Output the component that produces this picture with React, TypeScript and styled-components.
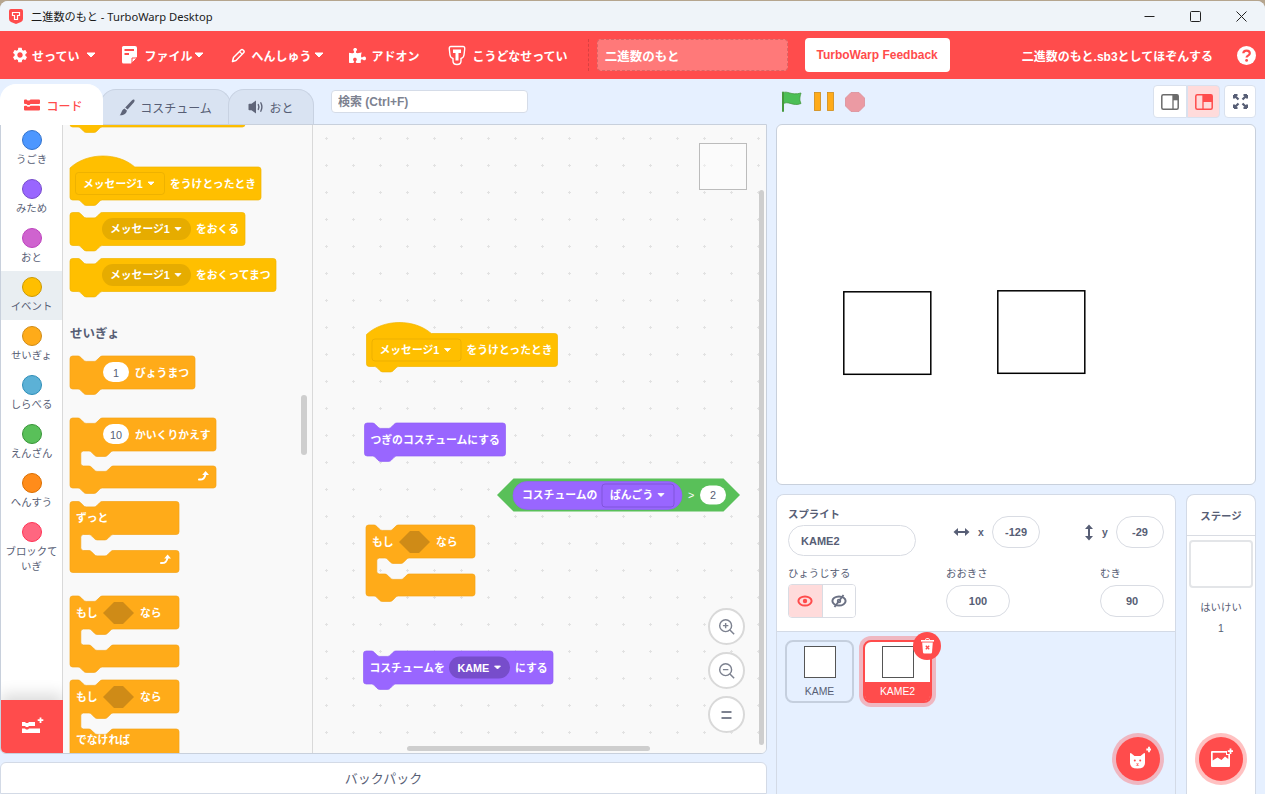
import React from "react";
import styled, { createGlobalStyle } from "styled-components";
import { MdSettings } from "react-icons/md";
import { FaPuzzlePiece } from "react-icons/fa";

const SANS = `"Liberation Sans", "Noto Sans CJK JP", sans-serif`;
const TEXT = "#575e75";
const RED = "#ff4c4c";

const GlobalStyle = createGlobalStyle`
  html, body { margin: 0; padding: 0; height: 100%; overflow: hidden; background: #b5a58e; }
  * { box-sizing: border-box; }
`;

const Win = styled.div`
  margin-top: 1px;
  height: 793px;
  display: flex;
  flex-direction: column;
  font-family: ${SANS};
  border-radius: 8px 8px 0 0;
  overflow: hidden;
  background: #e6f0ff;
`;

const TitleBar = styled.div`
  height: 30px;
  flex: none;
  display: flex;
  align-items: center;
  padding: 0 1px 0 8px;
  background: #eff4f9;
  font-family: "Noto Sans", "Noto Sans CJK JP", sans-serif;
  font-size: 11.2px;
  color: #1b1b1b;
`;

const TitleText = styled.span`
  margin-left: 7px;
  flex: 1;
`;

const WinButton = styled.div`
  width: 46px;
  height: 30px;
  display: flex;
  align-items: center;
  justify-content: center;
`;

const MenuBar = styled.div`
  height: 48px;
  flex: none;
  display: flex;
  align-items: center;
  background: ${RED};
  padding: 0 9px 0 11px;
  color: #fff;
  font-size: 12px;
  font-weight: bold;
`;

const MenuItem = styled.div<{ $gap: number }>`
  display: flex;
  align-items: center;
  margin-right: ${(p) => p.$gap}px;
  white-space: nowrap;
`;

const MenuLabel = styled.span<{ $left: number; $right?: number }>`
  margin-left: ${(p) => p.$left}px;
  margin-right: ${(p) => p.$right ?? 0}px;
`;

const MenuDivider = styled.div`
  width: 1px;
  height: 32px;
  border-left: 1px dashed rgba(0, 0, 0, 0.15);
  margin-right: 8px;
`;

const TitleInput = styled.div`
  width: 191px;
  height: 32px;
  margin-right: 17px;
  padding-left: 7px;
  display: flex;
  align-items: center;
  background: rgba(255, 255, 255, 0.25);
  border: 1px dashed rgba(0, 0, 0, 0.15);
  border-radius: 4px;
  font-size: 12.5px;
`;

const FeedbackButton = styled.div`
  width: 145px;
  height: 34px;
  display: flex;
  align-items: center;
  justify-content: center;
  background: #fff;
  border-radius: 4px;
  color: ${RED};
`;

const SaveLabel = styled.div`
  margin-left: auto;
  margin-right: 24px;
  white-space: nowrap;
`;

const Main = styled.div`
  flex: 1;
  min-height: 0;
  display: flex;
  gap: 9px;
`;

const LeftColumn = styled.div`
  width: 767px;
  flex: none;
  padding-top: 5px;
  display: flex;
  flex-direction: column;
`;

const TabRow = styled.div`
  height: 40px;
  flex: none;
  display: flex;
  align-items: flex-end;
`;

const Tab = styled.div<{ $active?: boolean; $width: number }>`
  width: ${(p) => p.$width}px;
  height: ${(p) => (p.$active ? 41 : 35)}px;
  margin-left: ${(p) => (p.$active ? 0 : -3)}px;
  margin-bottom: ${(p) => (p.$active ? -1 : 0)}px;
  padding-left: ${(p) => (p.$active ? 4 : 0)}px;
  z-index: ${(p) => (p.$active ? 2 : 1)};
  display: flex;
  align-items: center;
  justify-content: center;
  gap: ${(p) => (p.$active ? 6 : 5)}px;
  font-size: 12px;
  font-weight: ${(p) => (p.$active ? 500 : "normal")};
  color: ${(p) => (p.$active ? RED : TEXT)};
  background: ${(p) => (p.$active ? "#fff" : "#d9e3f2")};
  border: 1px solid ${(p) => (p.$active ? "#fff" : "#c8d2e2")};
  border-bottom: none;
  border-radius: 16px 16px 0 0;
`;

const SearchInput = styled.input`
  width: 197px;
  height: 23px;
  margin: 0 0 11px 17px;
  padding: 0 6px;
  border: 1px solid #d5dce8;
  border-radius: 4px;
  background: #fff;
  font-family: ${SANS};
  font-size: 12px;
  font-weight: bold;
  &::placeholder { color: #7d8290; opacity: 1; }
`;

const Editor = styled.div`
  height: 630px;
  flex: none;
  position: relative;
  display: flex;
  background: #fff;
  border: 1px solid #c8d0dc;
  border-radius: 0 0 6px 6px;
  overflow: hidden;
`;

const Categories = styled.div`
  width: 62px;
  flex: none;
  display: flex;
  flex-direction: column;
  position: relative;
  margin-top: -1px;
  border-right: 1px solid #d9d9d9;
`;

const Category = styled.div<{ $active?: boolean }>`
  min-height: 49px;
  padding: 6px 2px 0;
  display: flex;
  flex-direction: column;
  align-items: center;
  gap: 2px;
  font-size: 10.4px;
  line-height: 15px;
  text-align: center;
  color: ${TEXT};
  background: ${(p) => (p.$active ? "#e9eef2" : "transparent")};
`;

const CategoryDot = styled.div<{ $color: string; $edge: string }>`
  width: 20px;
  height: 20px;
  flex: none;
  border-radius: 50%;
  background: ${(p) => p.$color};
  border: 1px solid ${(p) => p.$edge};
`;

const ExtensionButton = styled.div`
  position: absolute;
  left: 0;
  bottom: 0;
  width: 62px;
  height: 53px;
  display: flex;
  align-items: center;
  justify-content: center;
  background: ${RED};
  box-shadow: 0 -6px 14px rgba(0, 0, 0, 0.14);
`;

const Flyout = styled.div`
  width: 250px;
  flex: none;
  position: relative;
  background: #f9f9f9;
  border-right: 1px solid #d9d9d9;
  overflow: hidden;
`;

const Workspace = styled.div`
  flex: 1;
  position: relative;
  background-color: #f9f9f9;
  background-image: radial-gradient(circle, #e2e2e2 1px, transparent 1.4px);
  background-size: 27px 27px;
  overflow: hidden;
`;

const BlockCanvas = styled.svg`
  display: block;
  width: 100%;
  height: 100%;
  font-family: ${SANS};
`;

const Label = styled.text<{ $plain?: boolean }>`
  fill: #fff;
  font-size: 10.8px;
  font-weight: ${(p) => (p.$plain ? "normal" : "bold")};
`;

const Heading = styled.text`
  fill: ${TEXT};
  font-size: 12.5px;
  font-weight: bold;
`;

const FieldText = styled.text`
  fill: ${TEXT};
  font-size: 10.8px;
  text-anchor: middle;
`;

const ScrollThumb = styled.div<{ $x: number; $y: number; $w: number; $h: number }>`
  position: absolute;
  left: ${(p) => p.$x}px;
  top: ${(p) => p.$y}px;
  width: ${(p) => p.$w}px;
  height: ${(p) => p.$h}px;
  border-radius: 4px;
  background: #cecece;
`;

const Minimap = styled.div`
  position: absolute;
  right: 19px;
  top: 18px;
  width: 48px;
  height: 47px;
  background: rgba(255, 255, 255, 0.35);
  border: 1px solid #bcbcbc;
`;

const ZoomStack = styled.div`
  position: absolute;
  right: 21px;
  bottom: 20px;
  display: flex;
  flex-direction: column;
  gap: 7px;
`;

const ZoomButton = styled.div`
  width: 37px;
  height: 37px;
  border-radius: 50%;
  display: flex;
  align-items: center;
  justify-content: center;
  background: #fff;
  border: 2px solid #d9d9d9;
`;

const Backpack = styled.div`
  margin-top: 8px;
  flex: 1;
  display: flex;
  justify-content: center;
  padding-top: 5px;
  background: #fff;
  border: 1px solid #d3dae6;
  border-radius: 6px 6px 0 0;
  font-size: 13px;
  color: ${TEXT};
`;

const RightColumn = styled.div`
  width: 480px;
  flex: none;
  padding-top: 5px;
  display: flex;
  flex-direction: column;
`;

const ControlRow = styled.div`
  height: 40px;
  flex: none;
  display: flex;
  padding: 1px 0 6px;
`;

const RunControls = styled.div`
  display: flex;
  align-items: center;
  gap: 11px;
  margin-left: 5px;
`;

const ViewButtons = styled.div`
  margin-left: auto;
  display: flex;
`;

const ViewButton = styled.div<{ $active?: boolean; $side: "left" | "right" | "both"; $width: number }>`
  width: ${(p) => p.$width}px;
  height: 33px;
  margin-left: ${(p) => (p.$side === "both" ? 4 : 0)}px;
  display: flex;
  align-items: center;
  justify-content: center;
  background: ${(p) => (p.$active ? "#ffdbdb" : "#fff")};
  border: 1px solid #d9e1ee;
  border-radius: ${(p) =>
    p.$side === "left" ? "4px 0 0 4px" : p.$side === "right" ? "0 4px 4px 0" : "4px"};
`;

const Stage = styled.div`
  height: 361px;
  flex: none;
  background: #fff;
  border: 1px solid #c8d0dc;
  border-radius: 6px;
  overflow: hidden;
`;

const LowerRow = styled.div`
  margin-top: 9px;
  flex: 1;
  display: flex;
  gap: 10px;
`;

const SpritePanel = styled.div`
  width: 400px;
  flex: none;
  position: relative;
  display: flex;
  flex-direction: column;
  border: 1px solid #d3dae6;
  border-bottom: none;
  border-radius: 8px 8px 0 0;
  overflow: hidden;
`;

const SpriteInfo = styled.div`
  height: 137px;
  flex: none;
  padding: 13px 11px 0;
  background: #fff;
  border-bottom: 1px solid #d3dae6;
`;

const InfoRow = styled.div`
  display: flex;
  align-items: flex-start;
`;

const FieldColumn = styled.div<{ $width?: number; $auto?: boolean }>`
  width: ${(p) => (p.$width ? `${p.$width}px` : "auto")};
  margin-left: ${(p) => (p.$auto ? "auto" : 0)};
  display: flex;
  flex-direction: column;
`;

const FieldLabel = styled.div<{ $strong?: boolean }>`
  height: 13px;
  line-height: 13px;
  margin-bottom: ${(p) => (p.$strong ? 4 : 5)}px;
  font-size: 10.4px;
  font-weight: ${(p) => (p.$strong ? "bold" : "normal")};
  color: ${TEXT};
`;

const PillInput = styled.div<{ $width: number; $height?: number; $left?: boolean }>`
  width: ${(p) => p.$width}px;
  height: ${(p) => p.$height ?? 32}px;
  display: flex;
  align-items: center;
  justify-content: ${(p) => (p.$left ? "flex-start" : "center")};
  padding-left: ${(p) => (p.$left ? 12 : 0)}px;
  border: 1px solid #d9dce3;
  border-radius: 16px;
  background: #fff;
  font-size: 11px;
  font-weight: bold;
  color: ${TEXT};
`;

const CoordGroup = styled.div<{ $left?: number; $auto?: boolean }>`
  display: flex;
  align-items: center;
  margin-top: 8px;
  margin-left: ${(p) => (p.$auto ? "auto" : `${p.$left ?? 0}px`)};
  font-size: 10.4px;
  font-weight: bold;
  color: ${TEXT};
`;

const CoordLetter = styled.span`
  width: 22px;
  padding-left: 8px;
`;

const LowerInfoRow = styled(InfoRow)`
  margin-top: 11px;
`;

const VisibilityToggle = styled.div`
  display: flex;
  width: 68px;
  height: 34px;
  margin-top: -1px;
  border: 1px solid #d9dce3;
  border-radius: 4px;
  overflow: hidden;
`;

const VisibilityOption = styled.div<{ $active?: boolean }>`
  flex: 1;
  display: flex;
  align-items: center;
  justify-content: center;
  background: ${(p) => (p.$active ? "#ffdbdb" : "#fff")};
  & + & { border-left: 1px solid #d9dce3; }
`;

const SpriteList = styled.div`
  flex: 1;
  display: flex;
  align-items: flex-start;
  gap: 9px;
  padding: 8px 8px;
`;

const SpriteTile = styled.div<{ $selected?: boolean }>`
  position: relative;
  width: 69px;
  height: 63px;
  display: flex;
  flex-direction: column;
  align-items: center;
  border: 2px solid ${(p) => (p.$selected ? RED : "#c5cfde")};
  border-radius: 8px;
  background: ${(p) => (p.$selected ? "#fff" : "transparent")};
  box-shadow: ${(p) => (p.$selected ? "0 0 0 4px rgba(255, 76, 76, 0.35)" : "none")};
`;

const SpriteThumb = styled.div`
  width: 32px;
  height: 32px;
  margin-top: 4px;
  flex: none;
  background: #fff;
  border: 1px solid #555;
`;

const SpriteName = styled.div<{ $selected?: boolean }>`
  align-self: stretch;
  flex: 1;
  margin-top: 4px;
  display: flex;
  align-items: center;
  justify-content: center;
  font-size: 10.4px;
  color: ${(p) => (p.$selected ? "#fff" : TEXT)};
  background: ${(p) => (p.$selected ? RED : "transparent")};
  border-radius: 0 0 5px 5px;
`;

const DeleteBadge = styled.div`
  position: absolute;
  right: -11px;
  top: -10px;
  width: 28px;
  height: 28px;
  display: flex;
  align-items: center;
  justify-content: center;
  border-radius: 50%;
  background: ${RED};
`;

const AddButton = styled.div<{ $right: number }>`
  position: absolute;
  right: ${(p) => p.$right}px;
  bottom: 13px;
  width: 44px;
  height: 44px;
  display: flex;
  align-items: center;
  justify-content: center;
  border-radius: 50%;
  background: ${RED};
  box-shadow: 0 0 0 4px rgba(255, 76, 76, 0.35);
`;

const StagePanel = styled.div`
  width: 70px;
  flex: none;
  position: relative;
  display: flex;
  flex-direction: column;
  align-items: center;
  background: #fff;
  border: 1px solid #d3dae6;
  border-bottom: none;
  border-radius: 8px 8px 0 0;
  color: ${TEXT};
  font-size: 10.4px;
`;

const StageHeading = styled.div`
  align-self: stretch;
  height: 41px;
  display: flex;
  align-items: center;
  justify-content: center;
  font-weight: bold;
  border-bottom: 1px solid #d9dce3;
`;

const StageThumb = styled.div`
  width: 64px;
  height: 48px;
  margin-top: 4px;
  background: #fff;
  border: 2px solid #e3e5e8;
  border-radius: 4px;
`;

const StageCaption = styled.div`
  margin-top: 14px;
  line-height: 12px;
`;

const BackdropCount = styled.div`
  margin-top: 9px;
  line-height: 12px;
`;

/* block outlines, scaled the way the editor draws them (0.675) */
const R = "a2.7,2.7 0 0 1";
const NOTCH_R =
  "c1.35,0 2,.68 2.7,1.35 l2.7,2.7 c.68,.68 1.35,1.35 2.7,1.35 h8.1 c1.35,0 2,-.68 2.7,-1.35 l2.7,-2.7 c.68,-.68 1.35,-1.35 2.7,-1.35";
const NOTCH_L =
  "c-1.35,0 -2,.68 -2.7,1.35 l-2.7,2.7 c-.68,.68 -1.35,1.35 -2.7,1.35 h-8.1 c-1.35,0 -2,-.68 -2.7,-1.35 l-2.7,-2.7 c-.68,-.68 -1.35,-1.35 -2.7,-1.35";

const stackTop = (w: number) => `M0,2.7 ${R} 2.7,-2.7 H8 ${NOTCH_R} H${w - 2.7} ${R} 2.7,2.7`;

const bottomEdge = (w: number, y: number, bump: boolean) =>
  `V${y - 2.7} ${R} -2.7,2.7 ${bump ? `H32.3 ${NOTCH_L}` : ""} H2.7 ${R} -2.7,-2.7 Z`;

const stackPath = (w: number, h = 33) => `${stackTop(w)} ${bottomEdge(w, h, true)}`;

const hatPath = (w: number, h = 33) =>
  `M0,1 c16.9,-15.85 47.9,-15.85 64.8,-1 H${w - 2.7} ${R} 2.7,2.7 ${bottomEdge(w, h, true)}`;

const cPath = (w: number, top: number, mouth: number, arm: number, bump: boolean) => {
  const inner = top + mouth;
  return `${stackTop(w)} V${top - 2.7} ${R} -2.7,2.7 H43.2 ${NOTCH_L} H13.5
    a2.7,2.7 0 0 0 -2.7,2.7 V${inner - 2.7} a2.7,2.7 0 0 0 2.7,2.7 H18.9 ${NOTCH_R}
    H${w - 2.7} ${R} 2.7,2.7 ${bottomEdge(w, inner + arm, bump)}`;
};

const hexPath = (w: number, h: number) =>
  `M${h / 2},0 H${w - h / 2} L${w},${h / 2} L${w - h / 2},${h} H${h / 2} L0,${h / 2} Z`;

const EVENT = { fill: "#ffbf00", edge: "#f0b400", dark: "#e6ac00" };
const CONTROL = { fill: "#ffab19", edge: "#f5a316", dark: "#cf8b17" };
const LOOKS = { fill: "#9966ff", edge: "#9160f5", dark: "#774dcb" };

type Tone = typeof EVENT;

function Shape({ x, y, d, tone, children }: { x: number; y: number; d: string; tone: Tone; children?: React.ReactNode }) {
  return (
    <g transform={`translate(${x} ${y})`}>
      <path d={d} fill={tone.fill} stroke={tone.edge} strokeWidth={0.7} />
      {children}
    </g>
  );
}

const Caret = ({ x, y }: { x: number; y: number }) => (
  <path d={`M${x},${y} h6 l-3,3 z`} fill="#fff" stroke="#fff" strokeWidth={0.8} strokeLinejoin="round" />
);

const Text = ({ x, y = 20.5, children }: { x: number; y?: number; children: React.ReactNode }) => (
  <Label x={x} y={y}>{children}</Label>
);

const MessagePill = () => (
  <>
    <rect x={32} y={5.5} width={89} height={22} rx={11} fill={EVENT.dark} />
    <Text x={40}>メッセージ1</Text>
    <Caret x={105} y={15} />
  </>
);

const NumberPill = ({ value }: { value: string }) => (
  <>
    <rect x={33} y={6} width={26} height={20} rx={10} fill="#fff" />
    <FieldText x={46} y={20.5}>{value}</FieldText>
  </>
);

const LoopArrow = ({ x, y }: { x: number; y: number }) => (
  <g transform={`translate(${x} ${y})`}>
    <path d="M0,8.5 C4,9 6,7 6.5,3" fill="none" stroke="#fff" strokeWidth={2} strokeLinecap="round" />
    <path d="M3.2,4 L6.6,0 L10,4 Z" fill="#fff" />
  </g>
);

const HexSlot = ({ x, y }: { x: number; y: number }) => (
  <path d={hexPath(31, 22)} transform={`translate(${x} ${y})`} fill={CONTROL.dark} />
);

function MessageHat({ x, y }: { x: number; y: number }) {
  return (
    <Shape x={x} y={y} d={hatPath(191)} tone={EVENT}>
      <rect x={5.5} y={5.5} width={89} height={22} rx={3} fill={EVENT.fill} stroke={EVENT.dark} strokeWidth={0.7} />
      <Text x={13}>メッセージ1</Text>
      <Caret x={78} y={15} />
      <Text x={100}>をうけとったとき</Text>
    </Shape>
  );
}

function IfBlock({ x, y }: { x: number; y: number }) {
  return (
    <Shape x={x} y={y} d={cPath(109, 33, 16, 22, true)} tone={CONTROL}>
      <Text x={6}>もし</Text>
      <HexSlot x={33} y={6} />
      <Text x={70}>なら</Text>
    </Shape>
  );
}

function Palette() {
  return (
    <BlockCanvas>
      <g transform="translate(-63 -125)">
        <Shape x={70} y={94} d={stackPath(175)} tone={EVENT} />
        <MessageHat x={70} y={167} />
        <Shape x={70} y={212.5} d={stackPath(175)} tone={EVENT}>
          <MessagePill />
          <Text x={126}>をおくる</Text>
        </Shape>
        <Shape x={70} y={258.5} d={stackPath(206)} tone={EVENT}>
          <MessagePill />
          <Text x={126}>をおくってまつ</Text>
        </Shape>
        <Heading x={70} y={338}>せいぎょ</Heading>
        <Shape x={70} y={356} d={stackPath(125)} tone={CONTROL}>
          <NumberPill value="1" />
          <Text x={65}>びょうまつ</Text>
        </Shape>
        <Shape x={70} y={418} d={cPath(146, 33, 15, 22, true)} tone={CONTROL}>
          <NumberPill value="10" />
          <Text x={65}>かいくりかえす</Text>
          <LoopArrow x={129} y={53} />
        </Shape>
        <Shape x={70} y={501.5} d={cPath(109, 33, 16, 22, false)} tone={CONTROL}>
          <Text x={6}>ずっと</Text>
          <LoopArrow x={91} y={53} />
        </Shape>
        <IfBlock x={70} y={596} />
        <Shape x={70} y={680} d={cPath(109, 33, 16, 40, true)} tone={CONTROL}>
          <Text x={6}>もし</Text>
          <HexSlot x={33} y={6} />
          <Text x={70}>なら</Text>
          <Text x={6} y={64}>でなければ</Text>
        </Shape>
      </g>
    </BlockCanvas>
  );
}

function Script() {
  return (
    <BlockCanvas>
      <g transform="translate(-313 -125)">
        <MessageHat x={366.5} y={333.5} />
        <Shape x={364.5} y={423} d={stackPath(141)} tone={LOOKS}>
          <Text x={6}>つぎのコスチュームにする</Text>
        </Shape>
        <g transform="translate(497 478.5)">
          <path d={hexPath(243, 33)} fill="#59c059" />
          <rect x={16} y={3} width={169} height={28} rx={14} fill={LOOKS.fill} stroke={LOOKS.edge} strokeWidth={0.7} />
          <Text x={25}>コスチュームの</Text>
          <rect x={105} y={5.5} width={72} height={23} rx={3} fill={LOOKS.fill} stroke={LOOKS.dark} strokeWidth={0.7} />
          <Text x={113}>ばんごう</Text>
          <Caret x={161} y={15} />
          <Label $plain x={191} y={20}>&gt;</Label>
          <rect x={203} y={7} width={26} height={19} rx={9.5} fill="#fff" />
          <FieldText x={216} y={20.5}>2</FieldText>
        </g>
        <IfBlock x={366} y={525} />
        <Shape x={363.5} y={651} d={stackPath(189.5)} tone={LOOKS}>
          <Text x={6}>コスチュームを</Text>
          <rect x={85.5} y={5.5} width={61} height={22} rx={11} fill={LOOKS.dark} />
          <Text x={94}>KAME</Text>
          <Caret x={131} y={15} />
          <Text x={151.5}>にする</Text>
        </Shape>
      </g>
    </BlockCanvas>
  );
}

const AppIcon = () => (
  <svg width="16" height="17" viewBox="0 0 16 17">
    <path d="M1,3 Q1,1 3,1 H13 Q15,1 15,3 V11 Q15,13 13,14 L8,16 L3,14 Q1,13 1,11 Z" fill="#ff4c4c" />
    <path d="M4.5,4.5 H11.5 V7.5 H9.5 V11.5 H6.5 V7.5 H4.5 Z" fill="none" stroke="#fff" strokeWidth={1.2} />
  </svg>
);

const MenuCaret = () => (
  <svg width="10" height="6" viewBox="0 0 10 6">
    <path d="M1,1 H9 L5,5 Z" fill="#fff" stroke="#fff" strokeWidth={1} strokeLinejoin="round" />
  </svg>
);

const FileIcon = () => (
  <svg width="17" height="20" viewBox="0 0 17 20">
    <path d="M2.5,1 H14 Q16,1 16,3 V12 L10,18.5 H2.5 Q1,18.5 1,17 V2.5 Q1,1 2.5,1 Z" fill="#fff" />
    <path d="M3.5,5 H13 M3.5,9 H8" stroke={RED} strokeWidth={1.8} />
    <path d="M11,18 L11,13 L16,13 Z" fill="#fff" stroke={RED} strokeWidth={1} />
  </svg>
);

const PencilIcon = () => (
  <svg width="14" height="15" viewBox="0 0 14 15">
    <path d="M1.5,13.5 L2.5,9.5 L10,2 Q11,1 12,2 L12.8,2.8 Q13.6,3.8 12.6,4.8 L5,12.5 Z" fill="none" stroke="#fff" strokeWidth={1.5} strokeLinejoin="round" />
    <path d="M8.5,3.5 L11.2,6.2" stroke="#fff" strokeWidth={1.2} />
  </svg>
);

const GuideIcon = () => (
  <svg width="18" height="21" viewBox="0 0 18 21">
    <path d="M3,1.5 H15 Q17,1.5 16.7,4 L16,10 Q15.5,13 13,13.5 V16 Q13,19.5 9,19.5 Q5,19.5 5,16 V13.5 Q2.5,13 2,10 L1.3,4 Q1,1.5 3,1.5 Z" fill="none" stroke="#fff" strokeWidth={1.4} />
    <path d="M5,4.5 H13 V8 H10.5 V15.5 H7.5 V8 H5 Z" fill="#fff" />
  </svg>
);

const HelpIcon = () => (
  <svg width="19" height="19" viewBox="0 0 19 19">
    <circle cx="9.5" cy="9.5" r="9.5" fill="#fff" />
    <path d="M6.3,7.3 C6.4,3.6 12.8,3.6 12.8,7.3 C12.8,9.6 9.6,9.5 9.6,11.4" fill="none" stroke={RED} strokeWidth={2.2} />
    <circle cx="9.6" cy="14.4" r="1.4" fill={RED} />
  </svg>
);

const CodeIcon = () => (
  <svg width="16" height="12" viewBox="0 0 16 12">
    <path d="M0,1.5 Q0,.5 1,.5 H2.5 L3.5,1.5 H5.5 L6.5,.5 H15 Q16,.5 16,1.5 V4 Q16,5 15,5 H6.5 L5.5,6 H3.5 L2.5,5 H1 Q0,5 0,4 Z" fill={RED} />
    <path d="M0,7.5 Q0,6.8 1,6.8 H2.5 L3.5,7.8 H5.5 L6.5,6.8 H15 Q16,6.8 16,7.5 V10.5 Q16,11.5 15,11.5 H1 Q0,11.5 0,10.5 Z" fill={RED} />
  </svg>
);

const BrushIcon = () => (
  <svg width="16" height="17" viewBox="0 0 16 17">
    <path d="M15,.6 C16,1.2 15.6,2.6 14.8,3.6 L8.6,10.6 L6.2,8.6 L12.8,1.6 C13.6,.8 14.4,.2 15,.6 Z" fill="#5f6579" />
    <path d="M5.4,9.4 L7.9,11.5 C7.6,14.6 4.4,16.6 .6,16.2 C2.6,14.8 2.2,10.8 5.4,9.4 Z" fill="#5f6579" />
  </svg>
);

const SpeakerIcon = () => (
  <svg width="16" height="14" viewBox="0 0 16 14">
    <path d="M.5,4.5 Q.5,3.8 1.3,3.8 H3.5 L8,.5 V13.5 L3.5,10.2 H1.3 Q.5,10.2 .5,9.5 Z" fill="#5f6579" />
    <path d="M10.3,4.6 Q11.6,7 10.3,9.4 M12.8,2.8 Q15,7 12.8,11.2" fill="none" stroke="#5f6579" strokeWidth={1.4} strokeLinecap="round" />
  </svg>
);

const AddBlocksIcon = () => (
  <svg width="24" height="20" viewBox="0 0 24 20">
    <path d="M2,5 H5 L6,6 H8 L9,5 H15 V9 H9 L8,10 H6 L5,9 H2 Z" fill="#fff" />
    <path d="M2,11.5 H5 L6,12.5 H8 L9,11.5 H20 V16 H2 Z" fill="#fff" />
    <path d="M20.5,.5 V6 M17.7,3.2 H23.3" stroke="#fff" strokeWidth={1.8} />
  </svg>
);

const ZoomGlass = ({ mark }: { mark: "in" | "out" }) => (
  <svg width="17" height="17" viewBox="0 0 20 20">
    <circle cx="9" cy="9" r="7" fill="none" stroke="#7d8290" strokeWidth={1.7} />
    <path d="M14,14 L19,19" stroke="#7d8290" strokeWidth={1.7} />
    <path d={mark === "in" ? "M5.8,9 H12.2 M9,5.8 V12.2" : "M5.8,9 H12.2"} stroke="#7d8290" strokeWidth={1.7} />
  </svg>
);

const ZoomReset = () => (
  <svg width="11" height="10" viewBox="0 0 11 10">
    <path d="M.5,2 H10.5 M.5,8 H10.5" stroke="#7d8290" strokeWidth={2} />
  </svg>
);

const FlagIcon = () => (
  <svg width="22" height="21" viewBox="0 0 22 21">
    <path d="M2,2 C6,-1 10,5 20,2 C19,6 18,8 20,12.5 C12,16 7,9 2,13 Z" fill="#4cbf56" stroke="#45993d" strokeWidth={0.8} />
    <path d="M2,1.5 V20" stroke="#45993d" strokeWidth={2} strokeLinecap="round" />
  </svg>
);

const PauseIcon = () => (
  <svg width="20" height="19" viewBox="0 0 20 19">
    <rect x="0.5" y="0.5" width="6" height="18" fill="#ffab19" stroke="#cf8b17" strokeWidth={0.8} />
    <rect x="13.5" y="0.5" width="6" height="18" fill="#ffab19" stroke="#cf8b17" strokeWidth={0.8} />
  </svg>
);

const StopIcon = () => (
  <svg width="20" height="20" viewBox="0 0 20 20">
    <path d="M6,.5 H14 L19.5,6 V14 L14,19.5 H6 L.5,14 V6 Z" fill="#eb9aa3" stroke="#dc8f98" strokeWidth={0.8} />
  </svg>
);

const LayoutSmallIcon = () => (
  <svg width="18" height="16" viewBox="0 0 18 16">
    <rect x=".8" y=".8" width="16.4" height="14.4" rx="1.5" fill="#fff" stroke="#6b6b6b" strokeWidth={1.5} />
    <path d="M12,1 V15" stroke="#6b6b6b" strokeWidth={1.3} />
    <rect x="12" y=".8" width="5.2" height="5.5" fill="#6b6b6b" />
  </svg>
);

const LayoutLargeIcon = () => (
  <svg width="18" height="16" viewBox="0 0 18 16">
    <rect x=".8" y=".8" width="16.4" height="14.4" rx="1.5" fill="#ffdbdb" stroke={RED} strokeWidth={1.5} />
    <path d="M8,1 V15" stroke={RED} strokeWidth={1.3} />
    <rect x="8" y=".8" width="9.2" height="7.2" fill={RED} />
  </svg>
);

const FullscreenIcon = () => (
  <svg width="15" height="15" viewBox="0 0 15 15">
    <path d="M1,1 L5.5,5.5 M1,1 H4.5 M1,1 V4.5 M14,1 L9.5,5.5 M14,1 H10.5 M14,1 V4.5 M1,14 L5.5,9.5 M1,14 H4.5 M1,14 V10.5 M14,14 L9.5,9.5 M14,14 H10.5 M14,14 V10.5" stroke="#575e75" strokeWidth={2.2} fill="none" />
  </svg>
);

const HorizontalArrows = () => (
  <svg width="17" height="10" viewBox="0 0 17 10">
    <path d="M4,5 H13" stroke="#575e75" strokeWidth={2} />
    <path d="M5,1 L.5,5 L5,9 Z M12,1 L16.5,5 L12,9 Z" fill="#575e75" />
  </svg>
);

const VerticalArrows = () => (
  <svg width="10" height="17" viewBox="0 0 10 17">
    <path d="M5,4 V13" stroke="#575e75" strokeWidth={2} />
    <path d="M1,5 L5,.5 L9,5 Z M1,12 L5,16.5 L9,12 Z" fill="#575e75" />
  </svg>
);

const EyeIcon = ({ off }: { off?: boolean }) => {
  const color = off ? "#6b7184" : RED;
  return (
    <svg width="16" height="14" viewBox="0 0 16 14">
      <ellipse cx="8" cy="7" rx="6.6" ry="4.6" fill="none" stroke={color} strokeWidth={2} />
      {off ? (
        <>
          <circle cx="8" cy="7" r="1.6" fill="none" stroke={color} strokeWidth={1.3} />
          <path d="M12.5,1 L3.5,13" stroke={color} strokeWidth={1.8} />
        </>
      ) : (
        <circle cx="8" cy="7" r="2.2" fill={color} />
      )}
    </svg>
  );
};

const TrashIcon = () => (
  <svg width="15" height="16" viewBox="0 0 15 16">
    <path d="M5.5,1.8 Q5.5,.6 6.7,.6 H8.3 Q9.5,.6 9.5,1.8" fill="none" stroke="#fff" strokeWidth={1} />
    <path d="M1,2 H14 V3.6 H1 Z" fill="#fff" />
    <path d="M2.2,4.6 H12.8 L12,14.4 Q11.9,15.5 10.8,15.5 H4.2 Q3.1,15.5 3,14.4 Z" fill="#fff" />
    <path d="M5.8,7.8 L9.2,11.2 M9.2,7.8 L5.8,11.2" stroke={RED} strokeWidth={1.3} />
  </svg>
);

const CatIcon = () => (
  <svg width="26" height="26" viewBox="0 0 26 26">
    <path d="M5,8 Q5,6.5 6.5,7.5 L9.5,10 H15.5 L18.5,7.5 Q20,6.5 20,8 V17 Q20,22.5 12.5,22.5 Q5,22.5 5,17 Z" fill="#fff" />
    <circle cx="9.8" cy="14.5" r="1" fill={RED} />
    <circle cx="15.2" cy="14.5" r="1" fill={RED} />
    <path d="M11,17.5 H14 L12.5,19 Z M10.5,20 Q12.5,18.6 14.5,20" fill={RED} />
    <path d="M24,.8 V6.2 M21.3,3.5 H26" stroke="#fff" strokeWidth={1.8} />
  </svg>
);

const BackdropIcon = () => (
  <svg width="24" height="22" viewBox="0 0 24 22">
    <path d="M2,4 Q2,3 3,3 H18 V6 H21 V18 Q21,19 20,19 H3 Q2,19 2,18 Z" fill="#fff" />
    <path d="M3.7,4.7 H17 V7 H19.3 V11 L16,8.5 L12.5,12 L8.5,9.5 L3.7,12.5 Z" fill={RED} />
    <path d="M21.5,.5 V6 M18.8,3.2 H24" stroke="#fff" strokeWidth={1.8} />
  </svg>
);

const CATEGORIES = [
  { name: "うごき", color: "#4c97ff", edge: "#3373cc" },
  { name: "みため", color: "#9966ff", edge: "#774dcb" },
  { name: "おと", color: "#cf63cf", edge: "#bd42bd" },
  { name: "イベント", color: "#ffbf00", edge: "#cc9900", active: true },
  { name: "せいぎょ", color: "#ffab19", edge: "#cf8b17" },
  { name: "しらべる", color: "#5cb1d6", edge: "#2e8eb8" },
  { name: "えんざん", color: "#59c059", edge: "#389438" },
  { name: "へんすう", color: "#ff8c1a", edge: "#db6e00" },
  { name: "ブロックていぎ", color: "#ff6680", edge: "#ff3355" },
];

export default function App() {
  return (
    <Win>
      <GlobalStyle />
      <TitleBar>
        <AppIcon />
        <TitleText>二進数のもと - TurboWarp Desktop</TitleText>
        <WinButton>
          <svg width="11" height="11" viewBox="0 0 11 11"><path d="M.5,5.5 H10.5" stroke="#222" /></svg>
        </WinButton>
        <WinButton>
          <svg width="11" height="11" viewBox="0 0 11 11"><rect x=".5" y=".5" width="10" height="10" rx="1" fill="none" stroke="#222" /></svg>
        </WinButton>
        <WinButton>
          <svg width="11" height="11" viewBox="0 0 11 11"><path d="M.5,.5 L10.5,10.5 M10.5,.5 L.5,10.5" stroke="#222" /></svg>
        </WinButton>
      </TitleBar>

      <MenuBar>
        <MenuItem $gap={25}>
          <MdSettings size={18} />
          <MenuLabel $left={3} $right={7}>せってい</MenuLabel>
          <MenuCaret />
        </MenuItem>
        <MenuItem $gap={27}>
          <FileIcon />
          <MenuLabel $left={6} $right={2}>ファイル</MenuLabel>
          <MenuCaret />
        </MenuItem>
        <MenuItem $gap={25}>
          <PencilIcon />
          <MenuLabel $left={6} $right={3}>へんしゅう</MenuLabel>
          <MenuCaret />
        </MenuItem>
        <MenuItem $gap={29}>
          <FaPuzzlePiece size={17} />
          <MenuLabel $left={5}>アドオン</MenuLabel>
        </MenuItem>
        <MenuItem $gap={20}>
          <GuideIcon />
          <MenuLabel $left={6}>こうどなせってい</MenuLabel>
        </MenuItem>
        <MenuDivider />
        <TitleInput>二進数のもと</TitleInput>
        <FeedbackButton>TurboWarp Feedback</FeedbackButton>
        <SaveLabel>二進数のもと.sb3としてほぞんする</SaveLabel>
        <HelpIcon />
      </MenuBar>

      <Main>
        <LeftColumn>
          <TabRow>
            <Tab $active $width={103}><CodeIcon />コード</Tab>
            <Tab $width={131}><BrushIcon />コスチューム</Tab>
            <Tab $width={86}><SpeakerIcon />おと</Tab>
            <SearchInput placeholder="検索 (Ctrl+F)" />
          </TabRow>
          <Editor>
            <Categories>
              {CATEGORIES.map((c) => (
                <Category key={c.name} $active={c.active}>
                  <CategoryDot $color={c.color} $edge={c.edge} />
                  {c.name}
                </Category>
              ))}
              <ExtensionButton><AddBlocksIcon /></ExtensionButton>
            </Categories>
            <Flyout>
              <Palette />
              <ScrollThumb $x={238} $y={270} $w={6} $h={60} />
            </Flyout>
            <Workspace>
              <Script />
              <Minimap />
              <ScrollThumb $x={446} $y={65} $w={5} $h={555} />
              <ScrollThumb $x={94} $y={621} $w={243} $h={5} />
              <ZoomStack>
                <ZoomButton><ZoomGlass mark="in" /></ZoomButton>
                <ZoomButton><ZoomGlass mark="out" /></ZoomButton>
                <ZoomButton><ZoomReset /></ZoomButton>
              </ZoomStack>
            </Workspace>
          </Editor>
          <Backpack>バックパック</Backpack>
        </LeftColumn>

        <RightColumn>
          <ControlRow>
            <RunControls>
              <FlagIcon />
              <PauseIcon />
              <StopIcon />
            </RunControls>
            <ViewButtons>
              <ViewButton $side="left" $width={34}><LayoutSmallIcon /></ViewButton>
              <ViewButton $side="right" $width={33} $active><LayoutLargeIcon /></ViewButton>
              <ViewButton $side="both" $width={32}><FullscreenIcon /></ViewButton>
            </ViewButtons>
          </ControlRow>
          <Stage>
            <svg width="478" height="359" viewBox="0 0 478 359">
              <rect x="66.8" y="166.8" width="87" height="82.5" fill="#fff" stroke="#000" strokeWidth="1.5" />
              <rect x="220.8" y="165.8" width="87" height="82.5" fill="#fff" stroke="#000" strokeWidth="1.5" />
            </svg>
          </Stage>
          <LowerRow>
            <SpritePanel>
              <SpriteInfo>
                <InfoRow>
                  <FieldColumn $width={128}>
                    <FieldLabel $strong>スプライト</FieldLabel>
                    <PillInput $width={128} $height={31} $left>KAME2</PillInput>
                  </FieldColumn>
                  <CoordGroup $left={37}>
                    <HorizontalArrows />
                    <CoordLetter>x</CoordLetter>
                    <PillInput $width={48}>-129</PillInput>
                  </CoordGroup>
                  <CoordGroup $auto>
                    <VerticalArrows />
                    <CoordLetter>y</CoordLetter>
                    <PillInput $width={48}>-29</PillInput>
                  </CoordGroup>
                </InfoRow>
                <LowerInfoRow>
                  <FieldColumn $width={158}>
                    <FieldLabel>ひょうじする</FieldLabel>
                    <VisibilityToggle>
                      <VisibilityOption $active><EyeIcon /></VisibilityOption>
                      <VisibilityOption><EyeIcon off /></VisibilityOption>
                    </VisibilityToggle>
                  </FieldColumn>
                  <FieldColumn>
                    <FieldLabel>おおきさ</FieldLabel>
                    <PillInput $width={64}>100</PillInput>
                  </FieldColumn>
                  <FieldColumn $auto>
                    <FieldLabel>むき</FieldLabel>
                    <PillInput $width={64}>90</PillInput>
                  </FieldColumn>
                </LowerInfoRow>
              </SpriteInfo>
              <SpriteList>
                <SpriteTile>
                  <SpriteThumb />
                  <SpriteName>KAME</SpriteName>
                </SpriteTile>
                <SpriteTile $selected>
                  <SpriteThumb />
                  <SpriteName $selected>KAME2</SpriteName>
                  <DeleteBadge><TrashIcon /></DeleteBadge>
                </SpriteTile>
              </SpriteList>
              <AddButton $right={15}><CatIcon /></AddButton>
            </SpritePanel>
            <StagePanel>
              <StageHeading>ステージ</StageHeading>
              <StageThumb />
              <StageCaption>はいけい</StageCaption>
              <BackdropCount>1</BackdropCount>
              <AddButton $right={12}><BackdropIcon /></AddButton>
            </StagePanel>
          </LowerRow>
        </RightColumn>
      </Main>
    </Win>
  );
}
